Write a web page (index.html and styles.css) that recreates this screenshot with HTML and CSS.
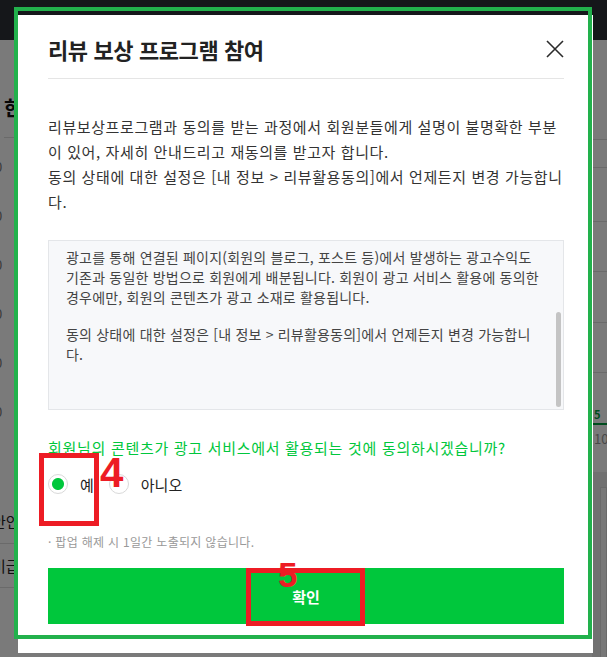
FILE: index.html
```html
<!DOCTYPE html>
<html lang="ko">
<head>
    <meta charset="UTF-8">
    <meta name="viewport" content="width=device-width, initial-scale=1.0">
    <title>리뷰 보상 프로그램 참여</title>
    <link rel="stylesheet" href="styles.css">
</head>
<body>
    <!-- page behind the layer -->
    <div class="page">
        <div class="gnb"></div>
        <div class="page-body">
            <div class="side-left">
                <h2 class="sec-title">한눈에 보기</h2>
                <ul class="stat-list">
                    <li>0</li>
                    <li>0</li>
                    <li>0</li>
                    <li>0</li>
                    <li>0</li>
                    <li>0</li>
                </ul>
                <div class="sub-band"></div>
                <div class="sub-row">안인</div>
                <div class="sub-row">미급</div>
            </div>
            <div class="side-gap"></div>
            <div class="side-right">
                <ul class="row-list">
                    <li class="r1"></li>
                    <li class="r2"></li>
                    <li class="r3"></li>
                    <li class="r4"></li>
                    <li class="r5"></li>
                    <li class="r6"></li>
                </ul>
                <div class="chart">
                    <span class="chart-val">5</span>
                    <span class="chart-line"></span>
                    <span class="chart-axis">10</span>
                </div>
                <div class="right-band"><div class="right-box"></div></div>
            </div>
        </div>
    </div>
    <div class="dim"></div>

    <div class="modal">
        <div class="modal-head">
            <h1 class="modal-title">리뷰 보상 프로그램 참여</h1>
            <button class="btn-close" type="button" aria-label="닫기">
                <svg width="18" height="18" viewBox="0 0 18 18">
                    <path d="M1 1L17 17M17 1L1 17" stroke="#2b2b2b" stroke-width="1.6" fill="none"/>
                </svg>
            </button>
        </div>

        <p class="desc">리뷰보상프로그램과 동의를 받는 과정에서 회원분들에게 설명이 불명확한 부분이 있어, 자세히 안내드리고 재동의를 받고자 합니다.<br>동의 상태에 대한 설정은 [내 정보 &gt; 리뷰활용동의]에서 언제든지 변경 가능합니다.</p>

        <div class="terms">
            <div class="terms-text" id="terms">
                <p>리뷰 보상 프로그램은 회원님이 작성한 리뷰(텍스트, 사진, 동영상 등)를 광고 소재로 활용하고, 그에 따른 보상을 회원님께 지급하는 프로그램입니다. 광고 소재로 활용된 리뷰는 검색, 쇼핑 등 다양한 영역에 노출될 수 있습니다.</p>
                <p>광고를 통해 연결된 페이지(회원의 블로그, 포스트 등)에서 발생하는 광고수익도 기존과 동일한 방법으로 회원에게 배분됩니다. 회원이 광고 서비스 활용에 동의한 경우에만, 회원의 콘텐츠가 광고 소재로 활용됩니다.</p>
                <p>동의 상태에 대한 설정은 [내 정보 &gt; 리뷰활용동의]에서 언제든지 변경 가능합니다.</p>
            </div>
            <div class="terms-track" id="track">
                <div class="terms-thumb" id="thumb"></div>
            </div>
        </div>

        <p class="question">회원님의 콘텐츠가 광고 서비스에서 활용되는 것에 동의하시겠습니까?</p>
        <div class="choices">
            <label class="radio"><input type="radio" name="agree" checked>예</label>
            <label class="radio"><input type="radio" name="agree">아니오</label>
        </div>

        <p class="note">· 팝업 해제 시 1일간 노출되지 않습니다.</p>
        <button class="btn-confirm" type="button">확인</button>

        <!-- guide marks drawn over the layer -->
        <div class="guide-frame"></div>
        <div class="guide-box box-4"></div>
        <span class="guide-num num-4">4</span>
        <div class="guide-box box-5"></div>
        <span class="guide-num num-5">5</span>
    </div>

    <script>
        // keep the terms box scrolled to the end and size the thumb
        document.addEventListener('DOMContentLoaded', function() {
            const terms = document.getElementById('terms');
            const track = document.getElementById('track');
            const thumb = document.getElementById('thumb');

            terms.scrollTop = terms.scrollHeight;

            const trackH = track.clientHeight - 4;
            const ratio = terms.clientHeight / terms.scrollHeight;
            const h = Math.round(trackH * ratio);
            thumb.style.height = h + 'px';
            thumb.style.marginTop = Math.round(trackH * terms.scrollTop / terms.scrollHeight) + 'px';
        });
    </script>
</body>
</html>
```

FILE: styles.css
```css
* {
    box-sizing: border-box;
}
html, body {
    margin: 0;
    height: 100%;
}
body {
    position: relative;
    overflow: hidden;
    background: #fff;
    font-family: "Noto Sans CJK KR", "Noto Sans", sans-serif;
    color: #333;
}
ul {
    margin: 0;
    padding: 0;
    list-style: none;
}

/* page behind */
.page {
    height: 100%;
    display: flex;
    flex-direction: column;
}
.gnb {
    flex-shrink: 0;
    height: 40px;
    background: #2d3137;
}
.page-body {
    flex: 1;
    min-height: 0;
    overflow: hidden;
    display: flex;
}
.side-left {
    width: 14px;
    overflow: hidden;
}
.side-gap {
    flex: 1;
}
.side-right {
    width: 15px;
    overflow: hidden;
}
.sec-title {
    margin: 53px 0 0 4px;
    height: 45px;
    font-size: 20px;
    line-height: 30px;
    color: #111;
    white-space: nowrap;
    border-bottom: 1px solid #dedede;
}
.stat-list {
    padding-top: 4px;
}
.stat-list li {
    height: 49px;
    line-height: 49px;
    font-size: 13px;
    color: #777;
    text-indent: -5px;
}
.sub-band {
    margin-top: 64px;
    height: 0;
}
.sub-row {
    height: 44px;
    line-height: 44px;
    font-size: 15px;
    color: #222;
    white-space: nowrap;
    text-indent: -8px;
    border-bottom: 1px solid #dedede;
}
.row-list li {
    border-bottom: 1px solid #dedede;
}
.row-list .r1 { height: 100px; }
.row-list .r2 { height: 28px; }
.row-list .r3 { height: 54px; }
.row-list .r4 { height: 50px; }
.row-list .r5 { height: 51px; }
.row-list .r6 { height: 50px; }
.chart {
    height: 99px;
    padding-top: 34px;
    display: flex;
    flex-direction: column;
}
.chart-val {
    font-size: 11px;
    font-weight: 700;
    line-height: 14px;
    color: #00a040;
    padding-left: 2px;
}
.chart-line {
    height: 2px;
    margin-top: 2px;
    background: #00a040;
}
.chart-axis {
    margin-top: 6px;
    font-size: 13px;
    line-height: 16px;
    color: #999;
    padding-left: 2px;
}
.right-band {
    height: 200px;
    background: #ececec;
    padding: 15px 0 0 8px;
}
.right-box {
    height: 100%;
    background: #fafafa;
    border: 1px solid #ddd;
}
.dim {
    position: absolute;
    inset: 0;
    background: rgba(0, 0, 0, 0.52);
}

/* layer */
.modal {
    position: absolute;
    left: 18px;
    top: 15px;
    width: 575px;
    height: 638px;
    padding: 0 29px 0 30px;
    background: #fff;
}
.modal-head {
    height: 64px;
    padding-top: 4px;
    display: flex;
    align-items: center;
    justify-content: space-between;
    border-bottom: 1px solid #e5e5e5;
}
.modal-title {
    margin: 0;
    font-size: 22px;
    font-weight: 700;
    line-height: 30px;
    letter-spacing: -0.4px;
    color: #222;
}
.btn-close {
    width: 18px;
    height: 18px;
    padding: 0;
    border: 0;
    background: none;
    cursor: pointer;
}
.btn-close svg {
    display: block;
}
.desc {
    margin: 35px -4px 0 0;
    font-size: 15px;
    line-height: 25px;
    letter-spacing: 0.6px;
    color: #333;
}
.terms {
    margin-top: 26px;
    height: 170px;
    display: flex;
    background: #f7f8fa;
    border: 1px solid #e4e6e9;
}
.terms-text {
    flex: 1;
    overflow-y: auto;
    scrollbar-width: none;
    padding: 50px 10px 45px 17px;
    font-size: 14px;
    line-height: 20px;
    letter-spacing: 0.2px;
    color: #444;
}
.terms-text::-webkit-scrollbar {
    display: none;
}
.terms-text p {
    margin: 0 0 17px;
}
.terms-text p:last-child {
    margin-bottom: 0;
}
.terms-track {
    width: 12px;
    padding: 2px 2px 2px 5px;
}
.terms-thumb {
    background: #c4c4c4;
    border-radius: 3px;
}
.question {
    margin: 27px 0 0;
    font-size: 15px;
    line-height: 22px;
    letter-spacing: 0.7px;
    color: #00c73c;
}
.choices {
    margin-top: 15px;
    display: flex;
    gap: 15px;
}
.radio {
    display: flex;
    align-items: center;
    gap: 12px;
    height: 20px;
    font-size: 15px;
    color: #222;
    cursor: pointer;
}
.radio input {
    appearance: none;
    -webkit-appearance: none;
    margin: 0;
    width: 20px;
    height: 20px;
    border: 1px solid #d9d9d9;
    border-radius: 50%;
    background: #fff;
}
.radio input:checked {
    background: radial-gradient(circle, #00c73c 0 5.5px, #fff 6.5px);
}
.note {
    margin: 39px 0 0;
    font-size: 12px;
    line-height: 18px;
    letter-spacing: 0.3px;
    color: #999;
}
.btn-confirm {
    display: block;
    width: 100%;
    height: 56px;
    margin-top: 17px;
    border: 0;
    background: #00c73c;
    color: #fff;
    font-family: inherit;
    font-size: 15px;
    font-weight: 700;
    cursor: pointer;
}

/* guide marks */
.guide-frame {
    position: absolute;
    left: -4px;
    top: -8px;
    width: 578px;
    height: 632px;
    border: 4px solid #22b14c;
    pointer-events: none;
}
.guide-box {
    position: absolute;
    border: 5px solid #ed1c24;
    pointer-events: none;
}
.box-4 {
    left: 21px;
    top: 438px;
    width: 60px;
    height: 73px;
}
.box-5 {
    left: 228px;
    top: 553px;
    width: 119px;
    height: 58px;
}
.guide-num {
    position: absolute;
    font-family: "Liberation Sans", Arial, sans-serif;
    font-weight: 700;
    line-height: 1;
    color: #ed1c24;
}
.num-4 {
    left: 82px;
    top: 437px;
    font-size: 42px;
}
.num-5 {
    left: 260px;
    top: 542px;
    font-size: 35px;
}
```
